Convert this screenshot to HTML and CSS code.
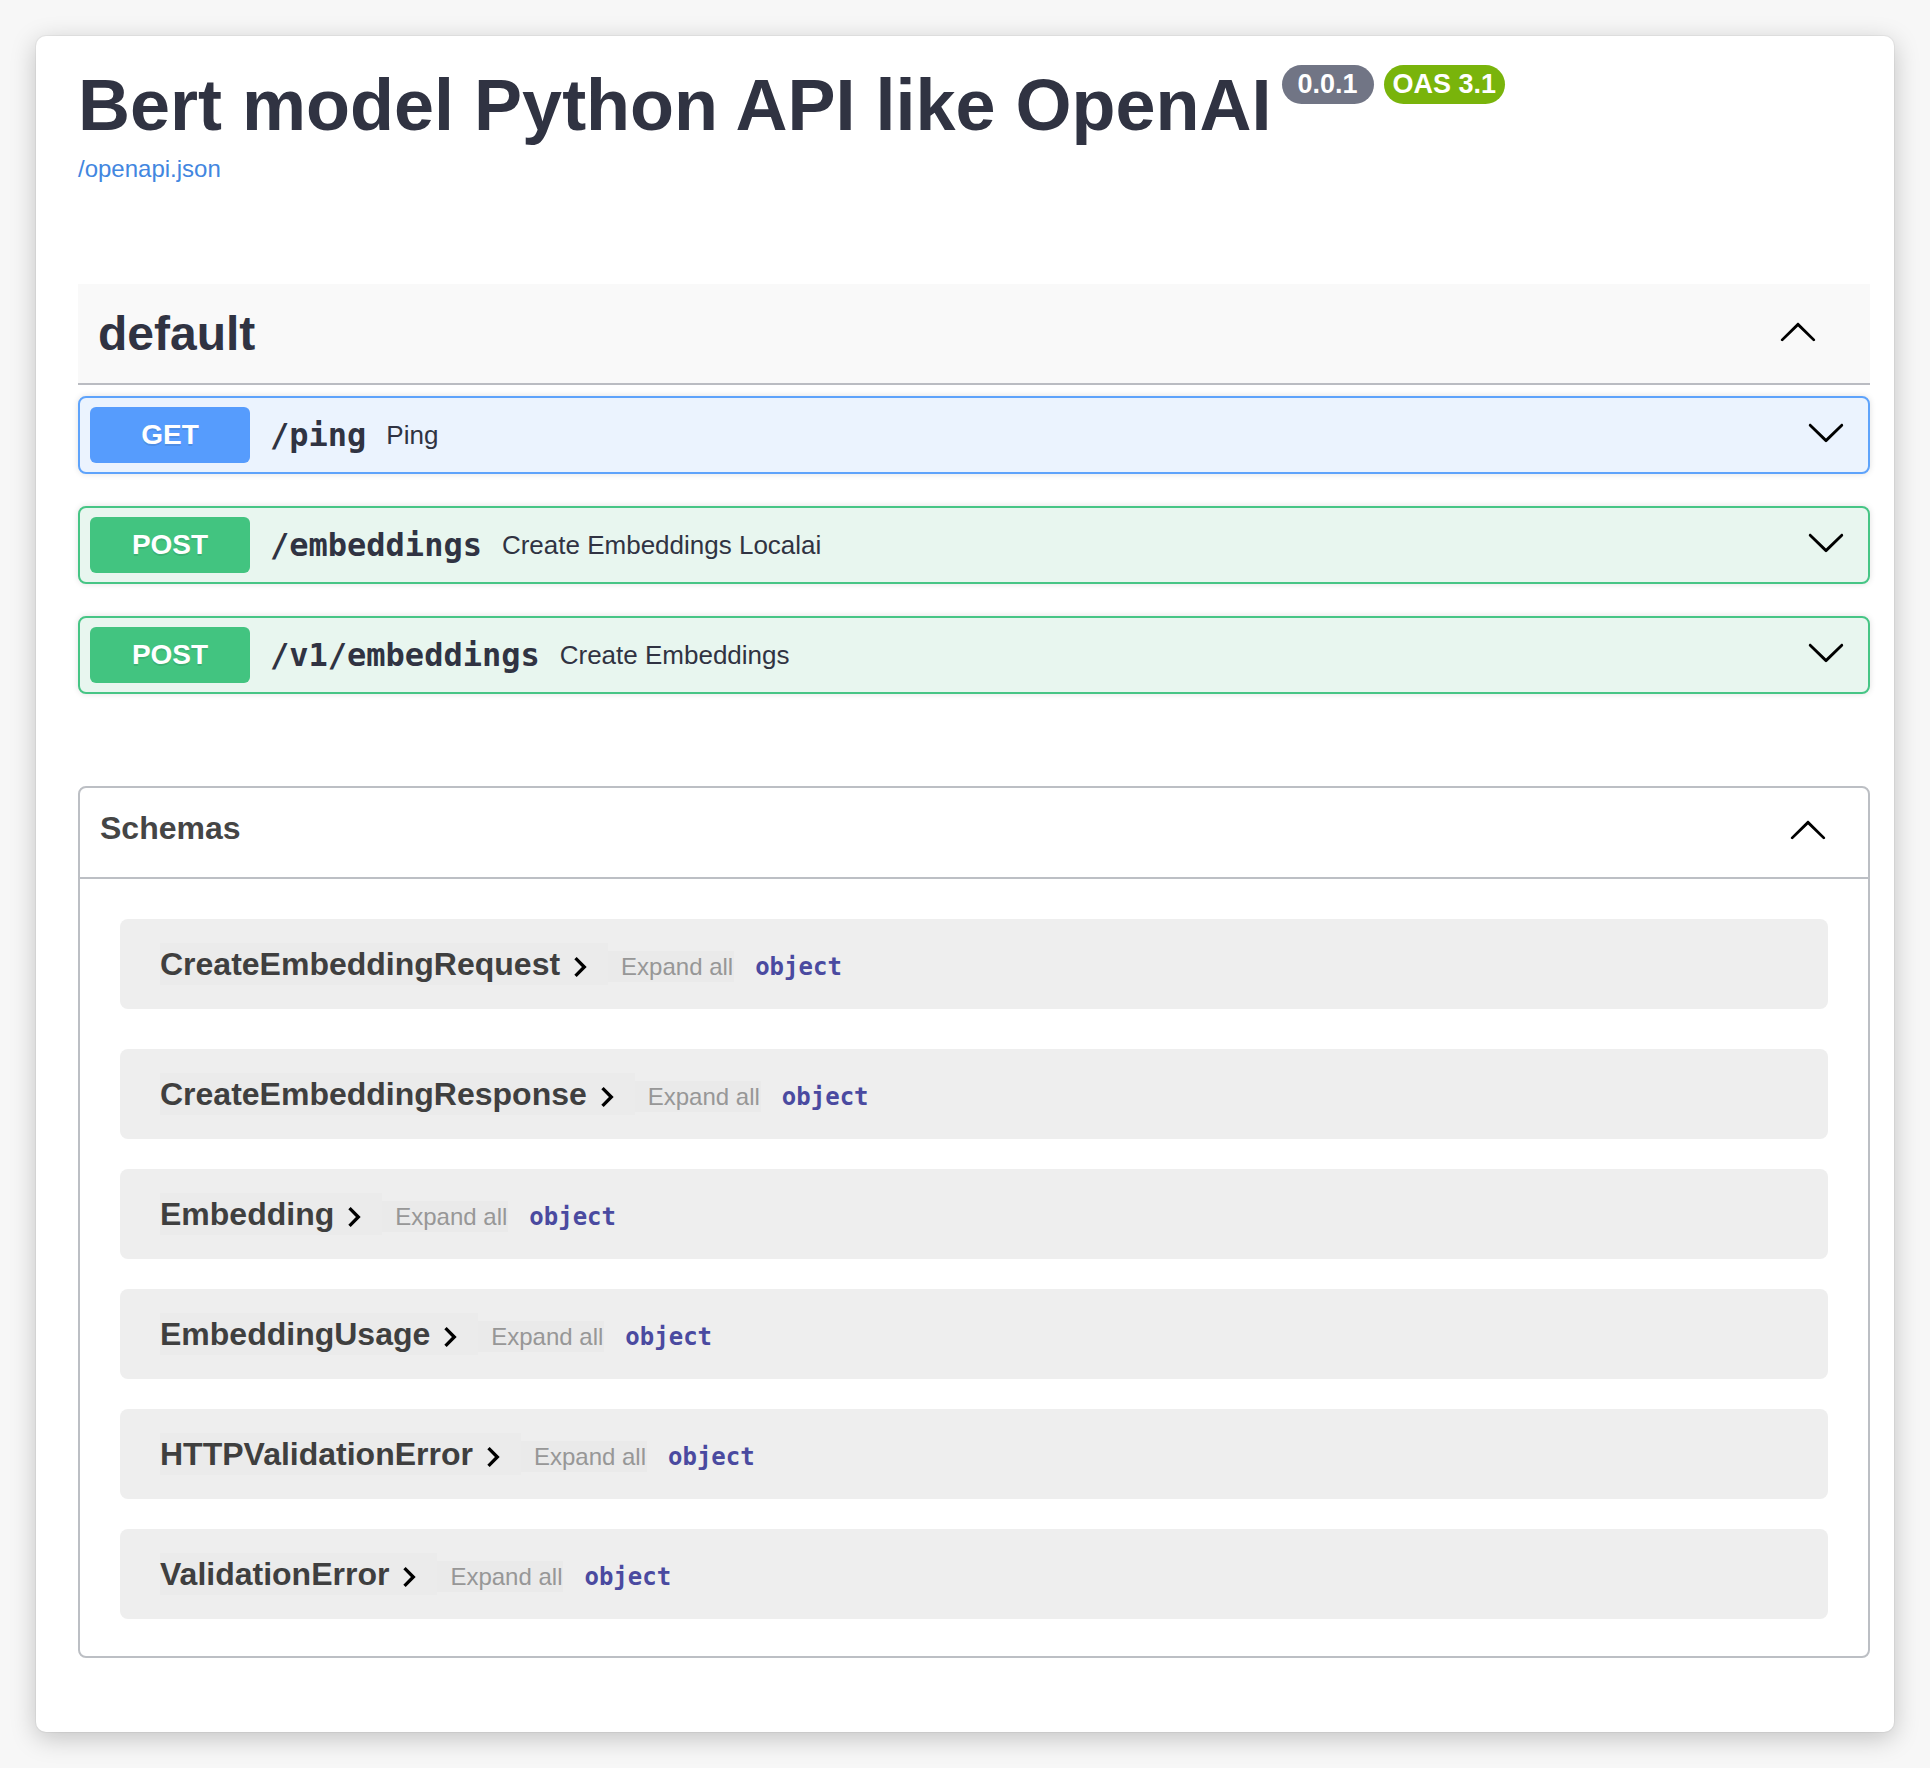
FILE: index.html
```html
<!DOCTYPE html>
<html lang="en">
<head>
<meta charset="utf-8">
<title>Bert model Python API like OpenAI</title>
<link rel="stylesheet" href="styles.css">
</head>
<body>
<div class="window">
  <div class="info">
    <h1 class="title">Bert model Python API like OpenAI<span class="badge badge-version">0.0.1</span><span class="badge badge-oas">OAS 3.1</span></h1>
    <div class="base-url"><a class="link" href="#">/openapi.json</a></div>
  </div>

  <section class="tag-section">
    <div class="tag-header">
      <h3 class="tag-name">default</h3>
      <svg class="arrow arrow-tag" viewBox="0 0 20 20" width="40" height="40"><path d="M17.418 14.908c.272.268.709.268.979 0s.271-.701 0-.969l-7.908-7.83c-.27-.268-.707-.268-.979 0l-7.908 7.83c-.27.268-.27.701 0 .969.271.268.709.268.979 0L10 7.767l7.418 7.141z"/></svg>
    </div>
    <div class="opblocks">
      <div class="opblock opblock-get">
        <span class="method">GET</span>
        <span class="path">/ping</span>
        <span class="desc">Ping</span>
        <svg class="arrow arrow-op" viewBox="0 0 20 20" width="40" height="40"><path d="M17.418 6.109c.272-.268.709-.268.979 0s.271.701 0 .969l-7.908 7.83c-.27.268-.707.268-.979 0l-7.908-7.83c-.27-.268-.27-.701 0-.969.271-.268.709-.268.979 0L10 13.25l7.418-7.141z"/></svg>
      </div>
      <div class="opblock opblock-post">
        <span class="method">POST</span>
        <span class="path">/embeddings</span>
        <span class="desc">Create Embeddings Localai</span>
        <svg class="arrow arrow-op" viewBox="0 0 20 20" width="40" height="40"><path d="M17.418 6.109c.272-.268.709-.268.979 0s.271.701 0 .969l-7.908 7.83c-.27.268-.707.268-.979 0l-7.908-7.83c-.27-.268-.27-.701 0-.969.271-.268.709-.268.979 0L10 13.25l7.418-7.141z"/></svg>
      </div>
      <div class="opblock opblock-post">
        <span class="method">POST</span>
        <span class="path">/v1/embeddings</span>
        <span class="desc">Create Embeddings</span>
        <svg class="arrow arrow-op" viewBox="0 0 20 20" width="40" height="40"><path d="M17.418 6.109c.272-.268.709-.268.979 0s.271.701 0 .969l-7.908 7.83c-.27.268-.707.268-.979 0l-7.908-7.83c-.27-.268-.27-.701 0-.969.271-.268.709-.268.979 0L10 13.25l7.418-7.141z"/></svg>
      </div>
    </div>
  </section>

  <section class="models">
    <div class="models-header">
      <h4 class="models-title">Schemas</h4>
      <svg class="arrow arrow-models" viewBox="0 0 20 20" width="40" height="40"><path d="M17.418 14.908c.272.268.709.268.979 0s.271-.701 0-.969l-7.908-7.83c-.27-.268-.707-.268-.979 0l-7.908 7.83c-.27.268-.27.701 0 .969.271.268.709.268.979 0L10 7.767l7.418 7.141z"/></svg>
    </div>
    <div class="model-list">
      <div class="model-row">
        <span class="model-title"><span class="model-name">CreateEmbeddingRequest</span><svg class="toggle" viewBox="0 0 24 24" width="40" height="40"><path d="M10 6L8.59 7.41 13.17 12l-4.58 4.59L10 18l6-6z"/></svg></span>
        <span class="expand">Expand all</span>
        <span class="prop-type">object</span>
      </div>
      <div class="model-row">
        <span class="model-title"><span class="model-name">CreateEmbeddingResponse</span><svg class="toggle" viewBox="0 0 24 24" width="40" height="40"><path d="M10 6L8.59 7.41 13.17 12l-4.58 4.59L10 18l6-6z"/></svg></span>
        <span class="expand">Expand all</span>
        <span class="prop-type">object</span>
      </div>
      <div class="model-row">
        <span class="model-title"><span class="model-name">Embedding</span><svg class="toggle" viewBox="0 0 24 24" width="40" height="40"><path d="M10 6L8.59 7.41 13.17 12l-4.58 4.59L10 18l6-6z"/></svg></span>
        <span class="expand">Expand all</span>
        <span class="prop-type">object</span>
      </div>
      <div class="model-row">
        <span class="model-title"><span class="model-name">EmbeddingUsage</span><svg class="toggle" viewBox="0 0 24 24" width="40" height="40"><path d="M10 6L8.59 7.41 13.17 12l-4.58 4.59L10 18l6-6z"/></svg></span>
        <span class="expand">Expand all</span>
        <span class="prop-type">object</span>
      </div>
      <div class="model-row">
        <span class="model-title"><span class="model-name">HTTPValidationError</span><svg class="toggle" viewBox="0 0 24 24" width="40" height="40"><path d="M10 6L8.59 7.41 13.17 12l-4.58 4.59L10 18l6-6z"/></svg></span>
        <span class="expand">Expand all</span>
        <span class="prop-type">object</span>
      </div>
      <div class="model-row">
        <span class="model-title"><span class="model-name">ValidationError</span><svg class="toggle" viewBox="0 0 24 24" width="40" height="40"><path d="M10 6L8.59 7.41 13.17 12l-4.58 4.59L10 18l6-6z"/></svg></span>
        <span class="expand">Expand all</span>
        <span class="prop-type">object</span>
      </div>
    </div>
  </section>
</div>
</body>
</html>
```

FILE: styles.css
```css
* {
  box-sizing: border-box;
}

html, body {
  margin: 0;
  padding: 0;
}

body {
  background: #f7f7f7;
  padding: 36px;
  font-family: "Liberation Sans", Arial, Helvetica, sans-serif;
  color: #303342;
}

.window {
  background: #ffffff;
  border-radius: 10px;
  box-shadow: 0 0 0 1px rgba(0, 0, 0, 0.04), 0 6px 26px rgba(0, 0, 0, 0.22);
  padding: 28px 24px 74px 42px;
}

/* ---------- info ---------- */
.info {
  margin-bottom: 101px;
}

.title {
  margin: 0;
  font-size: 72px;
  line-height: 82px;
  font-weight: 700;
  color: #303342;
}

.badge {
  display: inline-block;
  vertical-align: top;
  margin-top: 1px;
  height: 39px;
  line-height: 39px;
  font-size: 27px;
  font-weight: 700;
  color: #ffffff;
  border-radius: 40px;
}

.badge-version {
  margin-left: 10px;
  padding: 0 16px;
  background: #717585;
}

.badge-oas {
  margin-left: 10px;
  padding: 0 9px;
  background: #79b40b;
}

.base-url {
  margin-top: 9px;
  font-size: 24px;
  line-height: 28px;
}

.link {
  color: #4286e0;
  text-decoration: none;
}

/* ---------- tag section ---------- */
.tag-header {
  display: flex;
  align-items: center;
  justify-content: space-between;
  height: 101px;
  padding: 0 52px 0 20px;
  background: #f9f9f9;
  border-bottom: 2px solid rgba(59, 65, 81, 0.33);
  margin-bottom: 11px;
}

.tag-name {
  margin: 0;
  font-size: 48px;
  line-height: 55px;
  font-weight: 700;
  color: #303342;
}

.arrow {
  flex: none;
  fill: #000000;
}

.arrow-tag {
  margin-bottom: 6px;
}

.opblocks {
  display: flex;
  flex-direction: column;
  gap: 32px;
}

.opblock {
  display: flex;
  align-items: center;
  padding: 9px 10px;
  border: 2px solid #000;
  border-radius: 8px;
  box-shadow: 0 0 6px rgba(0, 0, 0, 0.12);
}

.opblock-get {
  background: #ebf3fe;
  border-color: #5ea3fb;
}

.opblock-get .method {
  background: #569cfd;
}

.opblock-post {
  background: #e8f6ef;
  border-color: #46c585;
}

.opblock-post .method {
  background: #42c480;
}

.method {
  flex: none;
  width: 160px;
  padding: 12px 0;
  font-size: 28px;
  line-height: 32px;
  font-weight: 700;
  text-align: center;
  color: #ffffff;
  border-radius: 6px;
  text-shadow: 0 2px 0 rgba(0, 0, 0, 0.1);
}

.path {
  padding: 0 20px;
  font-family: "DejaVu Sans Mono", "Liberation Mono", monospace;
  font-size: 32px;
  font-weight: 700;
  color: #303342;
}

.desc {
  flex: 1 1 auto;
  font-size: 26px;
  color: #303342;
}

.arrow-op {
  margin-right: 12px;
  margin-bottom: 6px;
}

/* ---------- models ---------- */
.models {
  margin-top: 92px;
  border: 2px solid #bcbfc4;
  border-radius: 8px;
}

.models-header {
  display: flex;
  align-items: center;
  justify-content: space-between;
  height: 91px;
  padding: 0 40px 8px 20px;
  border-bottom: 2px solid #bcbfc4;
}

.models-title {
  margin: 0;
  font-size: 32px;
  line-height: 37px;
  font-weight: 700;
  color: #454545;
}

.model-list {
  padding: 40px 40px 37px 40px;
}

.model-row {
  display: flex;
  align-items: baseline;
  height: 90px;
  padding: 24px 40px;
  background: #eeeeee;
  border-radius: 8px;
  margin-bottom: 30px;
}

.model-row:first-child {
  margin-bottom: 40px;
}

.model-row:last-child {
  margin-bottom: 0;
}

.model-title {
  display: inline-flex;
  align-items: center;
  height: 42px;
  padding-right: 8px;
  background: rgba(0, 0, 0, 0.012);
}

.model-name {
  font-size: 32px;
  line-height: 42px;
  font-weight: 700;
  color: #3f3f3f;
}

.toggle {
  flex: none;
  fill: #000000;
  margin-top: 6px;
}

.expand {
  padding: 2px 1px 2px 13px;
  font-size: 24px;
  line-height: 27px;
  color: #979797;
  background: rgba(0, 0, 0, 0.015);
}

.prop-type {
  margin-left: 21px;
  font-family: "DejaVu Sans Mono", "Liberation Mono", monospace;
  font-size: 24px;
  font-weight: 700;
  color: #4a4aa0;
}
```
